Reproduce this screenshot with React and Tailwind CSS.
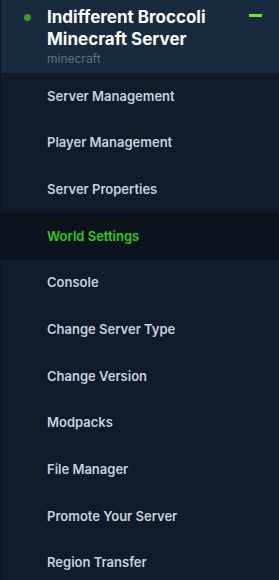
import React from 'react'

const items = [
  'Server Management',
  'Player Management',
  'Server Properties',
  'World Settings',
  'Console',
  'Change Server Type',
  'Change Version',
  'Modpacks',
  'File Manager',
  'Promote Your Server',
  'Region Transfer',
]

export default function App() {
  const active = 'World Settings'
  return (
    <div className="w-[279px] h-[580px] overflow-hidden bg-[#0f1b29] font-['Inter',sans-serif] border-l border-[#0b1520]">
      <div className="relative h-[73px] bg-[#172a3e] pl-[46px] pr-4 pt-[6px]">
        <span className="absolute left-[23px] top-[14px] w-[7px] h-[7px] rounded-full bg-[#3b9a20]" />
        <span className="absolute left-[248px] top-[14px] w-[13px] h-[3px] bg-[#62f00f]" />
        <div className="text-[17px] leading-[22px] font-bold text-white">
          Indifferent Broccoli
          <br />
          Minecraft Server
        </div>
        <div className="mt-px text-[12px] leading-[16px] text-[#5e6e7e]">minecraft</div>
      </div>
      <nav>
        {items.map(name => (
          <div
            key={name}
            className={
              name === active
                ? 'h-[46.7px] flex items-center pl-[46px] text-[13px] font-semibold text-[#2fcb18] bg-[#0b131c] border-l border-[#6ef01c] -ml-px'
                : 'h-[46.7px] flex items-center pl-[46px] text-[13px] font-semibold text-[#c6d0dc]'
            }
          >
            {name}
          </div>
        ))}
      </nav>
    </div>
  )
}
